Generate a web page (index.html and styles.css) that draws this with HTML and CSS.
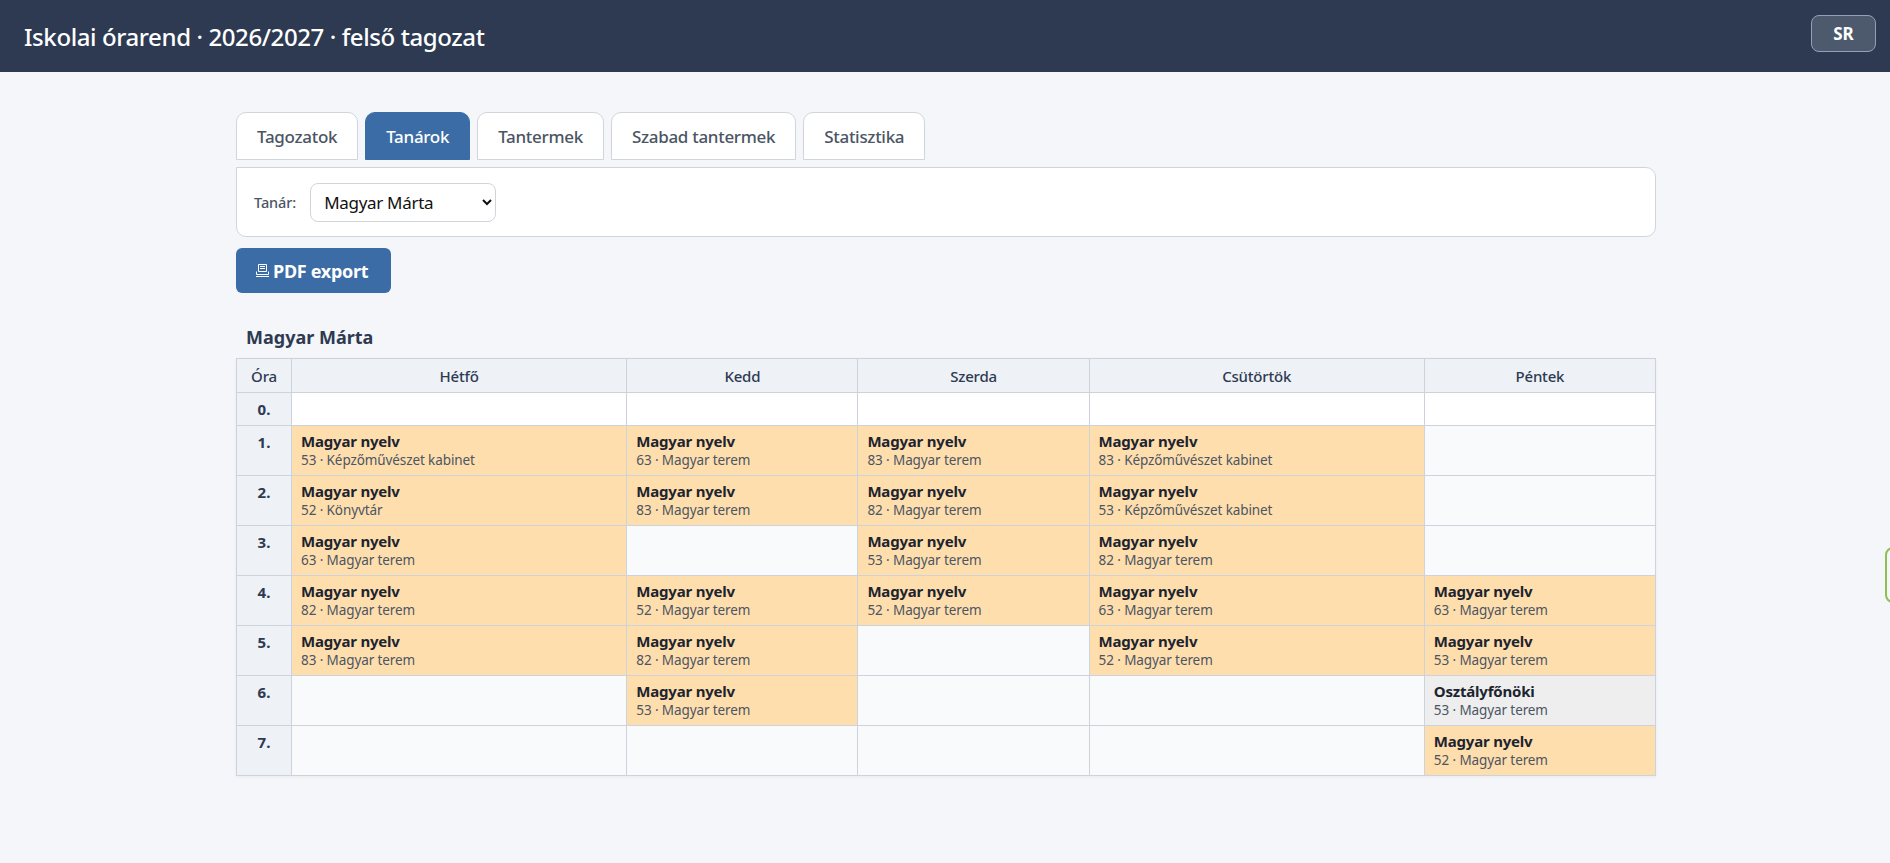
FILE: index.html
```html
<!DOCTYPE html>
<html lang="hu">
<head>
<meta charset="utf-8">
<title>Iskolai órarend</title>
<link rel="stylesheet" href="styles.css">
</head>
<body>
<header class="topbar">
  <h1 class="title">Iskolai órarend · 2026/2027 · felső tagozat</h1>
  <button class="user">SR</button>
</header>
<main class="page">
  <nav class="tabs">
    <a class="tab">Tagozatok</a>
    <a class="tab active">Tanárok</a>
    <a class="tab">Tantermek</a>
    <a class="tab">Szabad tantermek</a>
    <a class="tab">Statisztika</a>
  </nav>
  <section class="panel">
    <label class="field-label">Tanár:</label>
    <select class="picker"><option>Magyar Márta</option></select>
  </section>
  <button class="export">
    <svg class="print-icon" viewBox="0 0 15 15" width="15" height="15" aria-hidden="true"><path d="M3.5 1.5h8v7h-8zM5 3.5h5M5 5.5h5M1.5 8.5v3h12v-3M1 13.5h13" fill="none" stroke="currentColor" stroke-width="1"/></svg>
    <span>PDF export</span>
  </button>
  <h2 class="name">Magyar Márta</h2>
  <table class="grid">
    <colgroup><col class="c-h"><col class="c-w"><col class="c-n"><col class="c-n"><col class="c-w"><col class="c-n"></colgroup>
    <thead><tr><th>Óra</th><th>Hétfő</th><th>Kedd</th><th>Szerda</th><th>Csütörtök</th><th>Péntek</th></tr></thead>
    <tbody>
      <tr class="zero"><th>0.</th><td></td><td></td><td></td><td></td><td></td></tr>
      <tr><th>1.</th>
        <td class="les"><b>Magyar nyelv</b><span>53 · Képzőművészet kabinet</span></td>
        <td class="les"><b>Magyar nyelv</b><span>63 · Magyar terem</span></td>
        <td class="les"><b>Magyar nyelv</b><span>83 · Magyar terem</span></td>
        <td class="les"><b>Magyar nyelv</b><span>83 · Képzőművészet kabinet</span></td>
        <td></td></tr>
      <tr><th>2.</th>
        <td class="les"><b>Magyar nyelv</b><span>52 · Könyvtár</span></td>
        <td class="les"><b>Magyar nyelv</b><span>83 · Magyar terem</span></td>
        <td class="les"><b>Magyar nyelv</b><span>82 · Magyar terem</span></td>
        <td class="les"><b>Magyar nyelv</b><span>53 · Képzőművészet kabinet</span></td>
        <td></td></tr>
      <tr><th>3.</th>
        <td class="les"><b>Magyar nyelv</b><span>63 · Magyar terem</span></td>
        <td></td>
        <td class="les"><b>Magyar nyelv</b><span>53 · Magyar terem</span></td>
        <td class="les"><b>Magyar nyelv</b><span>82 · Magyar terem</span></td>
        <td></td></tr>
      <tr><th>4.</th>
        <td class="les"><b>Magyar nyelv</b><span>82 · Magyar terem</span></td>
        <td class="les"><b>Magyar nyelv</b><span>52 · Magyar terem</span></td>
        <td class="les"><b>Magyar nyelv</b><span>52 · Magyar terem</span></td>
        <td class="les"><b>Magyar nyelv</b><span>63 · Magyar terem</span></td>
        <td class="les"><b>Magyar nyelv</b><span>63 · Magyar terem</span></td></tr>
      <tr><th>5.</th>
        <td class="les"><b>Magyar nyelv</b><span>83 · Magyar terem</span></td>
        <td class="les"><b>Magyar nyelv</b><span>82 · Magyar terem</span></td>
        <td></td>
        <td class="les"><b>Magyar nyelv</b><span>52 · Magyar terem</span></td>
        <td class="les"><b>Magyar nyelv</b><span>53 · Magyar terem</span></td></tr>
      <tr><th>6.</th>
        <td></td>
        <td class="les"><b>Magyar nyelv</b><span>53 · Magyar terem</span></td>
        <td></td>
        <td></td>
        <td class="other"><b>Osztályfőnöki</b><span>53 · Magyar terem</span></td></tr>
      <tr><th>7.</th>
        <td></td><td></td><td></td><td></td>
        <td class="les"><b>Magyar nyelv</b><span>52 · Magyar terem</span></td></tr>
    </tbody>
  </table>
</main>
<div class="side-tab"></div>
</body>
</html>
```
FILE: styles.css
```css
* { box-sizing: border-box; }
html, body { height: 100%; }
body {
  margin: 0;
  background: #f4f6f9;
  color: #2d3a52;
  font-family: "Noto Sans", "Open Sans", sans-serif;
  overflow: hidden;
}
.topbar {
  height: 72px;
  background: #2d3a52;
  display: flex;
  align-items: center;
  justify-content: space-between;
  padding: 0 14px 0 24px;
}
.title {
  margin: 0;
  color: #fff;
  font-size: 24px;
  font-weight: 500;
  letter-spacing: -0.4px;
}
.user {
  width: 65px;
  height: 37px;
  margin-top: -5px;
  border: 1px solid #93a0b5;
  border-radius: 8px;
  background: #4d5a6e;
  color: #fff;
  font: 700 17px "Noto Sans", sans-serif;
  padding: 0;
}
.page {
  width: 1420px;
  margin: 0 auto;
  padding-top: 40px;
  position: relative;
  left: 1px;
}
.tabs {
  display: flex;
  gap: 7px;
  height: 48px;
}
.tab {
  display: flex;
  align-items: center;
  padding: 0 20px;
  background: #fff;
  border: 1px solid #d1d5db;
  border-bottom-width: 1px;
  border-radius: 10px 10px 0 0;
  color: #4b5563;
  font-size: 17px;
  font-weight: 500;
  letter-spacing: -0.3px;
}
.tab.active {
  background: #3b6ca5;
  border-color: #3b6ca5;
  color: #fff;
}
.panel {
  margin-top: 7px;
  height: 70px;
  background: #fff;
  border: 1px solid #d1d5db;
  border-radius: 0 10px 10px 10px;
  display: flex;
  align-items: center;
  padding: 0 17px;
  gap: 14px;
}
.field-label {
  color: #4b5563;
  font-size: 14.5px;
  font-weight: 500;
  letter-spacing: -0.1px;
}
.picker {
  width: 186px;
  height: 39px;
  border: 1px solid #d1d5db;
  border-radius: 8px;
  background: #fff;
  color: #111;
  font: 17px "Noto Sans", sans-serif;
  letter-spacing: -0.3px;
  padding: 0 9px;
}
.export {
  display: flex;
  align-items: center;
  gap: 3px;
  margin-top: 11px;
  width: 155px;
  height: 45px;
  padding: 0 0 0 19px;
  background: #3b6ca5;
  border: 0;
  border-radius: 6px;
  color: #fff;
  font: 700 18px "Noto Sans", sans-serif;
  letter-spacing: -0.3px;
}
.print-icon { flex: none; }
.name {
  margin: 30px 0 0 10px;
  height: 35px;
  font-size: 18px;
  font-weight: 700;
  line-height: 28px;
  color: #2d3a52;
}
.grid {
  width: 1420px;
  table-layout: fixed;
  border-collapse: collapse;
  background: #f9fafc;
  box-shadow: 0 1px 3px rgba(0,0,0,.05);
  font-size: 14px;
}
.c-h { width: 55px; }
.c-w { width: 335px; }
.c-n { width: 231px; }
.grid th, .grid td { border: 1px solid #cdd3dd; padding: 0; }
.grid thead th {
  height: 34px;
  background: #eef1f6;
  font-weight: 500;
  font-size: 15px;
  letter-spacing: -0.2px;
  color: #2d3a52;
}
.grid tbody tr { height: 50px; }
.grid tbody tr.zero { height: 33px; }
.grid tbody th {
  background: #eef1f6;
  font-weight: 700;
  font-size: 15px;
  vertical-align: top;
  padding-top: 4px;
  line-height: 24px;
}
.grid td { padding: 5px 9px 0; vertical-align: top; }
.zero td { background: #fff; }
.les { background: #ffdead; }
.other { background: #eeeeee; }
.grid b {
  display: block;
  color: #1c2430;
  font-size: 15px;
  font-weight: 700;
  line-height: 20px;
  letter-spacing: -0.2px;
}
.grid span {
  display: block;
  color: #4b5563;
  font-size: 13.5px;
  line-height: 18px;
  letter-spacing: -0.1px;
}
.side-tab {
  position: fixed;
  right: -20px;
  top: 547px;
  width: 25px;
  height: 56px;
  border: 2px solid #8cc152;
  border-radius: 8px;
  background: #f4f6f9;
}
```
